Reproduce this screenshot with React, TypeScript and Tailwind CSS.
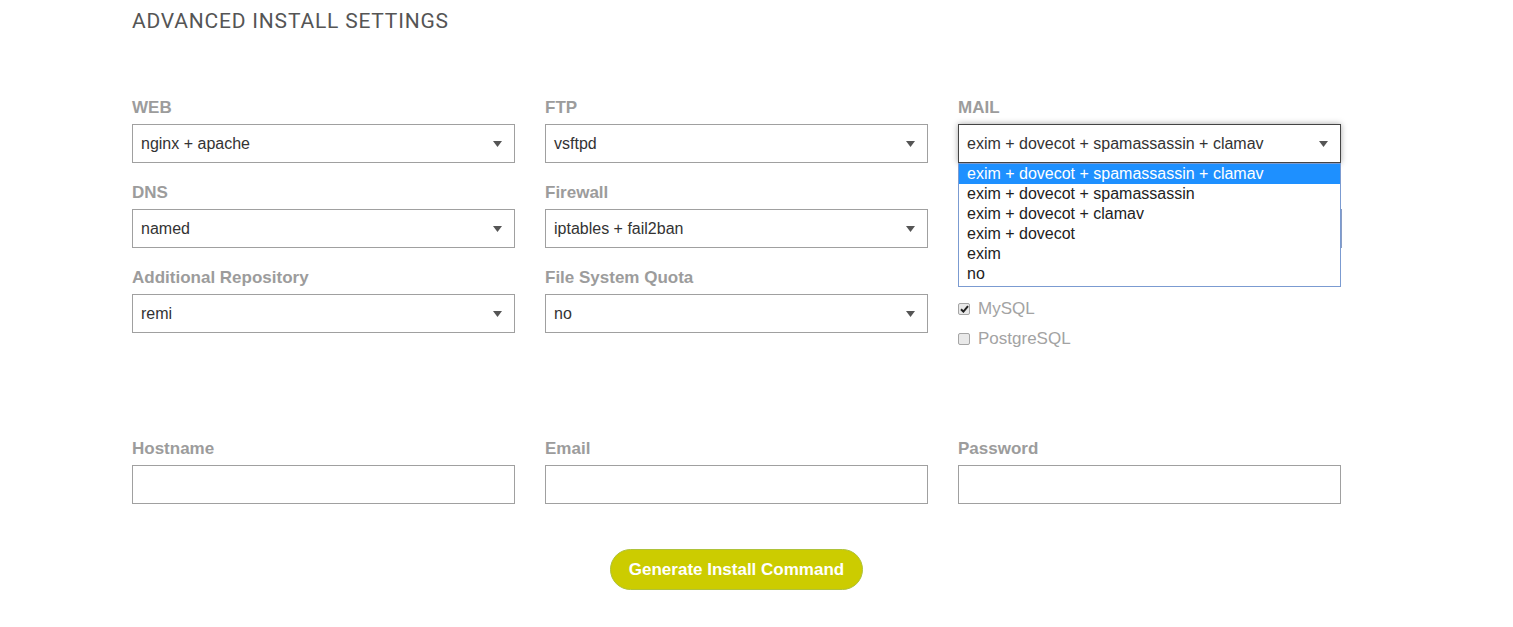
import React from "react";

const Arrow = () => (
  <svg width="9" height="6" viewBox="0 0 9 6" className="shrink-0">
    <path d="M0 0 L9 0 L4.5 6 Z" fill="#555" />
  </svg>
);

function Select({ value, focused }: { value: string; focused?: boolean }) {
  return (
    <div
      className={
        "h-[39px] w-full flex items-center justify-between pl-[8px] pr-[12px] bg-white text-[16px] text-[#333] border " +
        (focused ? "border-[#444] shadow-[0_0_6px_rgba(0,0,0,0.35)]" : "border-[#a0a0a0]")
      }
    >
      <span>{value}</span>
      <Arrow />
    </div>
  );
}

function Field({ label, children }: { label: string; children: React.ReactNode }) {
  return (
    <div className="flex flex-col">
      <div className="h-[22px] leading-[22px] text-[17px] font-bold text-[#9c9c9c] mb-[5px]">{label}</div>
      {children}
    </div>
  );
}

function Check({ checked, label }: { checked?: boolean; label: string }) {
  return (
    <div className="flex items-center h-[30px] gap-[8px]">
      <div className="w-[12px] h-[12px] rounded-[2px] border border-[#a5a5a5] bg-[#e9e9e9] flex items-center justify-center">
        {checked && (
          <svg width="9" height="8" viewBox="0 0 9 8">
            <path d="M1 4.2 L3.4 6.6 L8 1.2" stroke="#222" strokeWidth="2" fill="none" />
          </svg>
        )}
      </div>
      <span className="text-[17px] text-[#a3a3a3]">{label}</span>
    </div>
  );
}

const mailOptions = [
  "exim + dovecot + spamassassin + clamav",
  "exim + dovecot + spamassassin",
  "exim + dovecot + clamav",
  "exim + dovecot",
  "exim",
  "no",
];

export default function App() {
  return (
    <div className="w-[1513px] h-[627px] bg-white overflow-hidden" style={{ fontFamily: '"Liberation Sans", Arial, sans-serif' }}>
      <div className="pl-[132px] w-[1342px]">
        <h1
          className="pt-[9px] text-[21px] leading-[24px] text-[#555] tracking-[0.8px]"
          style={{ fontFamily: 'Roboto, "Liberation Sans", sans-serif' }}
        >
          ADVANCED INSTALL SETTINGS
        </h1>
        <div className="mt-[64px] grid grid-cols-[383px_383px_383px] gap-x-[30px] gap-y-[19px]">
          <Field label="WEB"><Select value="nginx + apache" /></Field>
          <Field label="FTP"><Select value="vsftpd" /></Field>
          <div className="relative">
            <Field label="MAIL"><Select value="exim + dovecot + spamassassin + clamav" focused /></Field>
            <div className="absolute left-0 top-[66px] w-[383px] z-10 bg-white border border-[#7b9bd1] pb-[2px] text-[16px] leading-[20px] text-[#222]">
              {mailOptions.map((o, i) => (
                <div key={o} className={"pl-[8px] h-[20px] " + (i === 0 ? "bg-[#1e90ff] text-white" : "")}>{o}</div>
              ))}
            </div>
          </div>

          <Field label="DNS"><Select value="named" /></Field>
          <Field label="Firewall"><Select value="iptables + fail2ban" /></Field>
          <div className="w-[384px] flex flex-col">
            <div className="h-[22px] mb-[5px]" />
            <div className="h-[39px] w-full border border-[#8a9ec4] bg-white" />
          </div>

          <Field label="Additional Repository"><Select value="remi" /></Field>
          <Field label="File System Quota"><Select value="no" /></Field>
          <div className="flex flex-col">
            <div className="h-[22px] mb-[5px]" />
            <Check checked label="MySQL" />
            <Check label="PostgreSQL" />
          </div>
        </div>

        <div className="mt-[84px] grid grid-cols-[383px_383px_383px] gap-x-[30px]">
          <Field label="Hostname"><div className="h-[39px] border border-[#a0a0a0]" /></Field>
          <Field label="Email"><div className="h-[39px] border border-[#a0a0a0]" /></Field>
          <Field label="Password"><div className="h-[39px] border border-[#a0a0a0]" /></Field>
        </div>

        <div className="mt-[45px] w-[1209px] flex justify-center">
          <button className="h-[41px] w-[253px] rounded-full bg-[#cccc00] border border-[#afc23a] text-white font-bold text-[17px]">
            Generate Install Command
          </button>
        </div>
      </div>
    </div>
  );
}
